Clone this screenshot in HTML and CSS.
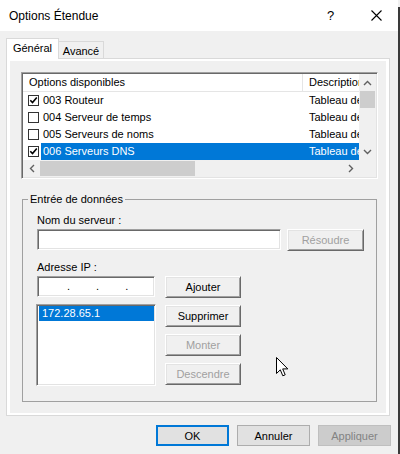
FILE: index.html
```html
<!DOCTYPE html>
<html lang="fr">
<head>
<meta charset="utf-8">
<title>Options Étendue</title>
<link rel="stylesheet" href="styles.css">
</head>
<body>
<div class="window">
  <div class="titlebar">
    <span class="title">Options Étendue</span>
    <span class="help">?</span>
    <span class="close"><svg width="11" height="11" viewBox="0 0 11 11"><path d="M0.5 0.5 L10.5 10.5 M10.5 0.5 L0.5 10.5" stroke="#000" stroke-width="1.1" fill="none"/></svg></span>
  </div>

  <div class="tabs">
    <div class="tab active">Général</div>
    <div class="tab inactive">Avancé</div>
  </div>

  <div class="panel">
    <div class="page">
      <div class="listview">
        <div class="lv-top">
          <div class="lv-area">
            <div class="lv-header">
              <div class="hcol1">Options disponibles</div>
              <div class="hcol2">Description</div>
            </div>
            <div class="row">
              <span class="cb"><svg width="9" height="9" viewBox="0 0 9 9"><path d="M1.3 4.3 L3.5 6.6 L7.8 1.6" stroke="#000" stroke-width="1.6" fill="none"/></svg></span>
              <span class="cell1">003 Routeur</span><span class="cell2">Tableau de</span>
            </div>
            <div class="row">
              <span class="cb"></span>
              <span class="cell1">004 Serveur de temps</span><span class="cell2">Tableau de</span>
            </div>
            <div class="row">
              <span class="cb"></span>
              <span class="cell1">005 Serveurs de noms</span><span class="cell2">Tableau de</span>
            </div>
            <div class="row selected">
              <span class="cb"><svg width="9" height="9" viewBox="0 0 9 9"><path d="M1.3 4.3 L3.5 6.6 L7.8 1.6" stroke="#000" stroke-width="1.6" fill="none"/></svg></span>
              <span class="cell1">006 Serveurs DNS</span><span class="cell2">Tableau de</span>
            </div>
          </div>
          <div class="vscroll">
            <div class="sb-btn"><svg width="9" height="6" viewBox="0 0 9 6"><path d="M1 5 L4.5 1.5 L8 5" stroke="#606060" stroke-width="1.4" fill="none"/></svg></div>
            <div class="vthumb"></div>
            <div class="sb-fill"></div>
            <div class="sb-btn"><svg width="9" height="6" viewBox="0 0 9 6"><path d="M1 1 L4.5 4.5 L8 1" stroke="#606060" stroke-width="1.4" fill="none"/></svg></div>
          </div>
        </div>
        <div class="hscroll">
          <div class="sb-btn h"><svg width="6" height="9" viewBox="0 0 6 9"><path d="M5 1 L1.5 4.5 L5 8" stroke="#606060" stroke-width="1.4" fill="none"/></svg></div>
          <div class="hthumb"></div>
          <div class="sb-fill"></div>
          <div class="sb-btn h"><svg width="6" height="9" viewBox="0 0 6 9"><path d="M1 1 L4.5 4.5 L1 8" stroke="#606060" stroke-width="1.4" fill="none"/></svg></div>
          <div class="sb-corner"></div>
        </div>
      </div>

      <fieldset class="group">
        <legend>Entrée de données</legend>
        <div class="gbody">
          <div class="label">Nom du serveur :</div>
          <div class="row1">
            <div class="textbox wide"></div>
            <div class="cbtn resolve disabled">Résoudre</div>
          </div>
          <div class="label second">Adresse IP :</div>
          <div class="row2">
            <div class="leftcol">
              <div class="textbox ipbox"><span class="dot">.</span><span class="dot">.</span><span class="dot">.</span></div>
              <div class="listbox">
                <div class="lb-item selected">172.28.65.1</div>
              </div>
            </div>
            <div class="btncol">
              <div class="cbtn">Ajouter</div>
              <div class="cbtn">Supprimer</div>
              <div class="cbtn disabled">Monter</div>
              <div class="cbtn disabled">Descendre</div>
            </div>
          </div>
        </div>
      </fieldset>
    </div>
  </div>

  <div class="footer">
    <div class="mbtn default">OK</div>
    <div class="mbtn">Annuler</div>
    <div class="mbtn disabled">Appliquer</div>
  </div>

  <svg class="cursor" width="13" height="20" viewBox="0 0 13 20"><path d="M0.5 0.5 L0.5 16.5 L4.3 12.8 L6.8 18.8 L9.2 17.8 L6.7 11.9 L11.8 11.9 Z" fill="#fff" stroke="#000" stroke-width="1"/></svg>
</div>
<div class="edge"></div>
</body>
</html>
```

FILE: styles.css
```css
* { box-sizing: border-box; }
html, body { margin: 0; padding: 0; }
body {
  width: 400px;
  height: 454px;
  overflow: hidden;
  display: flex;
  background: #f0f0f0;
  font-family: "Liberation Sans", Arial, sans-serif;
  font-size: 11px;
  color: #000;
}
.window {
  position: relative;
  width: 398px;
  height: 454px;
  background: #f0f0f0;
}
.edge {
  width: 2px;
  margin-top: 7px;
  background: #3a3a3a;
}

/* title bar */
.titlebar {
  height: 31px;
  background: #fff;
  display: flex;
  align-items: center;
  padding-left: 9px;
}
.title { flex: 1; font-size: 12px; }
.help { width: 7px; font-size: 13px; margin-right: 37px; }
.close { width: 11px; height: 11px; margin-right: 16px; display: flex; }

/* tabs */
.tabs {
  display: flex;
  align-items: flex-end;
  height: 20px;
  margin: 7px 0 0 6px;
}
.tab {
  border: 1px solid #d9d9d9;
  border-bottom: none;
  text-align: center;
  line-height: 13px;
  padding-top: 3px;
}
.tab.active {
  position: relative;
  z-index: 1;
  width: 53px;
  height: 21px;
  margin-bottom: -1px;
  background: #fff;
}
.tab.inactive {
  width: 46px;
  height: 17px;
  margin-left: -1px;
  background: #f0f0f0;
}

/* tab panel */
.panel {
  margin-left: 6px;
  width: 384px;
  height: 358px;
  border: 1px solid #d9d9d9;
  background: #fff;
  padding: 2px 3px;
}
.page {
  height: 352px;
  background: #f0f0f0;
  padding: 11px 0 0 11px;
}

/* list view */
.listview {
  width: 357px;
  height: 107px;
  border: 1px solid;
  border-color: #a0a0a0 #fff #fff #a0a0a0;
  box-shadow: inset 1px 1px 0 #696969, inset -1px -1px 0 #e3e3e3;
  padding: 1px;
  background: #fff;
  display: flex;
  flex-direction: column;
}
.lv-top { display: flex; height: 86px; }
.lv-area { width: 336px; background: #fff; overflow: hidden; }
.lv-header {
  display: flex;
  height: 18px;
  border-bottom: 1px solid #e5e5e5;
  line-height: 17px;
  white-space: nowrap;
}
.hcol1 { width: 280px; border-right: 1px solid #e5e5e5; padding-left: 6px; }
.hcol2 { width: 56px; padding-left: 6px; overflow: hidden; }
.row {
  display: flex;
  align-items: center;
  height: 17px;
  white-space: nowrap;
  line-height: 17px;
}
.cb {
  width: 11px;
  height: 11px;
  margin-left: 5px;
  margin-right: 2px;
  border: 1px solid #333;
  background: #fff;
  display: flex;
}
.cell1 { width: 262px; padding-left: 2px; }
.cell2 { width: 56px; padding-left: 6px; overflow: hidden; }
.row.selected .cell1, .row.selected .cell2 { background: #0078d7; color: #fff; }

.vscroll {
  width: 17px;
  background: #f0f0f0;
  display: flex;
  flex-direction: column;
}
.sb-btn {
  height: 17px;
  display: flex;
  align-items: center;
  justify-content: center;
}
.sb-btn.h { width: 17px; height: 17px; }
.vthumb { height: 17px; margin: 0 1px; background: #cdcdcd; }
.sb-fill { flex: 1; }
.hscroll {
  height: 17px;
  display: flex;
  background: #f0f0f0;
}
.hthumb { width: 155px; margin: 1px 0; background: #cdcdcd; }
.sb-corner { width: 17px; background: #f0f0f0; }

/* group box */
.group {
  margin: 14px 0 0 1px;
  padding: 0;
  min-width: 0;
  width: 355px;
  height: 209px;
  border: 1px solid #a0a0a0;
}
.group legend {
  padding: 0 2px;
  margin-left: 5px;
  line-height: 13px;
}
.gbody { padding: 8px 0 0 13px; }
.label { line-height: 13px; margin-left: 1px; }
.label.second { margin-top: 10px; }
.row1 { display: flex; align-items: flex-start; margin-top: 2px; }
.textbox {
  background: #fff;
  border: 1px solid;
  border-color: #a0a0a0 #fff #fff #a0a0a0;
  box-shadow: inset 1px 1px 0 #696969, inset -1px -1px 0 #e3e3e3;
}
.textbox.wide { width: 244px; height: 21px; margin-left: 1px; }
.row2 { display: flex; margin-top: 2px; }
.leftcol { width: 120px; display: flex; flex-direction: column; }
.ipbox {
  width: 118px;
  height: 21px;
  margin-left: 1px;
  display: flex;
  gap: 26px;
  padding-left: 29px;
  line-height: 18px;
}
.listbox {
  margin-top: 7px;
  width: 120px;
  height: 82px;
  background: #fff;
  border: 1px solid;
  border-color: #a0a0a0 #fff #fff #a0a0a0;
  box-shadow: inset 1px 1px 0 #696969, inset -1px -1px 0 #e3e3e3;
  padding: 1px;
}
.lb-item { height: 15px; line-height: 15px; padding-left: 3px; margin-left: 1px; }
.lb-item.selected { background: #0078d7; color: #fff; }

.btncol {
  margin-left: 9px;
  display: flex;
  flex-direction: column;
  gap: 7px;
}
.cbtn {
  width: 76px;
  height: 22px;
  display: flex;
  align-items: center;
  justify-content: center;
  background: #f0f0f0;
  border: 1px solid;
  border-color: #fff #696969 #696969 #fff;
  box-shadow: inset 1px 1px 0 #e3e3e3, inset -1px -1px 0 #a0a0a0;
}
.cbtn.resolve { width: 77px; margin-left: 6px; }
.cbtn.disabled { color: #a0a0a0; }

/* footer buttons */
.footer {
  display: flex;
  justify-content: flex-end;
  gap: 8px;
  margin-top: 9px;
  padding-right: 7px;
}
.mbtn {
  width: 73px;
  height: 21px;
  display: flex;
  align-items: center;
  justify-content: center;
  background: #e1e1e1;
  border: 1px solid #adadad;
}
.mbtn.default { border: 2px solid #0078d7; }
.mbtn.disabled { background: #cccccc; border-color: #bfbfbf; color: #838383; }

.cursor {
  position: absolute;
  left: 276px;
  top: 357px;
}
```
